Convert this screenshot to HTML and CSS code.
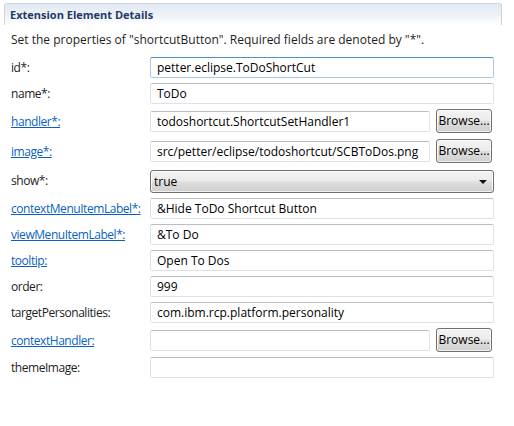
FILE: index.html
```html
<!DOCTYPE html>
<html>
<head>
<meta charset="utf-8">
<link rel="stylesheet" href="styles.css">
</head>
<body>
<div class="section">
  <div class="section-head">Extension Element Details</div>
  <div class="section-body">
    <p class="desc">Set the properties of "shortcutButton". Required fields are denoted by "*".</p>
    <div class="form">
      <span class="label">id*:</span>
      <div class="input focus wide">petter.eclipse.ToDoShortCut</div>

      <span class="label">name*:</span>
      <div class="input wide">ToDo</div>

      <a class="label link">handler*:</a>
      <div class="input">todoshortcut.ShortcutSetHandler1</div>
      <div class="btn">Browse...</div>

      <a class="label link shift">image*:</a>
      <div class="input shift">src/petter/eclipse/todoshortcut/SCBToDos.png</div>
      <div class="btn shift">Browse...</div>

      <span class="label">show*:</span>
      <div class="combo wide"><span>true</span><span class="arrow"></span></div>

      <a class="label link">contextMenuItemLabel*:</a>
      <div class="input wide">&amp;Hide ToDo Shortcut Button</div>

      <a class="label link">viewMenuItemLabel*:</a>
      <div class="input wide">&amp;To Do</div>

      <a class="label link">tooltip:</a>
      <div class="input wide">Open To Dos</div>

      <span class="label">order:</span>
      <div class="input wide">999</div>

      <span class="label">targetPersonalities:</span>
      <div class="input wide">com.ibm.rcp.platform.personality</div>

      <a class="label link">contextHandler:</a>
      <div class="input"></div>
      <div class="btn">Browse...</div>

      <span class="label">themeImage:</span>
      <div class="input wide"></div>
    </div>
  </div>
</div>
</body>
</html>
```
FILE: styles.css
```css
html, body {
  margin: 0;
  padding: 0;
  background: #ffffff;
}
body {
  font-family: "Open Sans", "Noto Sans", sans-serif;
  font-size: 12px;
  color: #1e1e1e;
  width: 514px;
  height: 426px;
  overflow: hidden;
}
.section {
  margin: 3px 0 0 4px;
  width: 498px;
}
.section-head {
  height: 22px;
  box-sizing: border-box;
  padding: 3px 0 0 5px;
  font-weight: bold;
  font-size: 11px;
  color: #1f3a66;
  border: 1px solid #c9d5e3;
  border-bottom: none;
  border-radius: 3px 3px 0 0;
  background: linear-gradient(to bottom, #e3eaf3 0%, #edf1f7 50%, #ffffff 100%);
}
.section-body {
  padding: 0 0 0 7px;
}
.desc {
  margin: 6px 0 0 0;
  line-height: 17px;
  height: 17px;
  white-space: nowrap;
}
.form {
  margin-top: 9px;
  display: grid;
  grid-template-columns: 133px 280px 57px;
  column-gap: 6px;
  row-gap: 5px;
  align-items: center;
}
.label {
  white-space: nowrap;
  line-height: 17px;
  letter-spacing: -0.45px;
}
.link {
  color: #0a5fc4;
  text-decoration: underline;
}
.shift {
  margin-top: 1px;
}
.input {
  height: 21px;
  box-sizing: border-box;
  border: 1px solid #dde2e8;
  border-top-color: #b9bec6;
  border-radius: 2px;
  padding: 0 6px;
  line-height: 19px;
  white-space: nowrap;
  overflow: hidden;
  color: #000;
}
.input.focus {
  border-color: #a8cbe8;
  border-top-color: #4d8fc6;
}
.wide {
  grid-column: 2 / 4;
  margin-right: -1px;
}
.btn {
  height: 24px;
  box-sizing: border-box;
  border: 1px solid #707070;
  border-radius: 3px;
  background: linear-gradient(to bottom, #f3f3f3 0%, #ebebeb 48%, #dddddd 52%, #d0d0d0 100%);
  box-shadow: inset 0 0 0 1px rgba(255,255,255,0.7);
  text-align: center;
  line-height: 21px;
  color: #000;
  margin-right: 1px;
  white-space: nowrap;
}
.combo {
  height: 23px;
  margin-top: 2px;
  box-sizing: border-box;
  border: 1px solid #707070;
  border-radius: 3px;
  background: linear-gradient(to bottom, #f3f3f3 0%, #ebebeb 48%, #dddddd 52%, #cfcfcf 100%);
  box-shadow: inset 0 0 0 1px rgba(255,255,255,0.7);
  padding: 0 3px;
  line-height: 20px;
  display: flex;
  justify-content: space-between;
  align-items: center;
  color: #000;
}
.arrow {
  width: 0;
  height: 0;
  border-left: 4px solid transparent;
  border-right: 4px solid transparent;
  border-top: 4px solid #111;
  margin-right: 3px;
}
```
